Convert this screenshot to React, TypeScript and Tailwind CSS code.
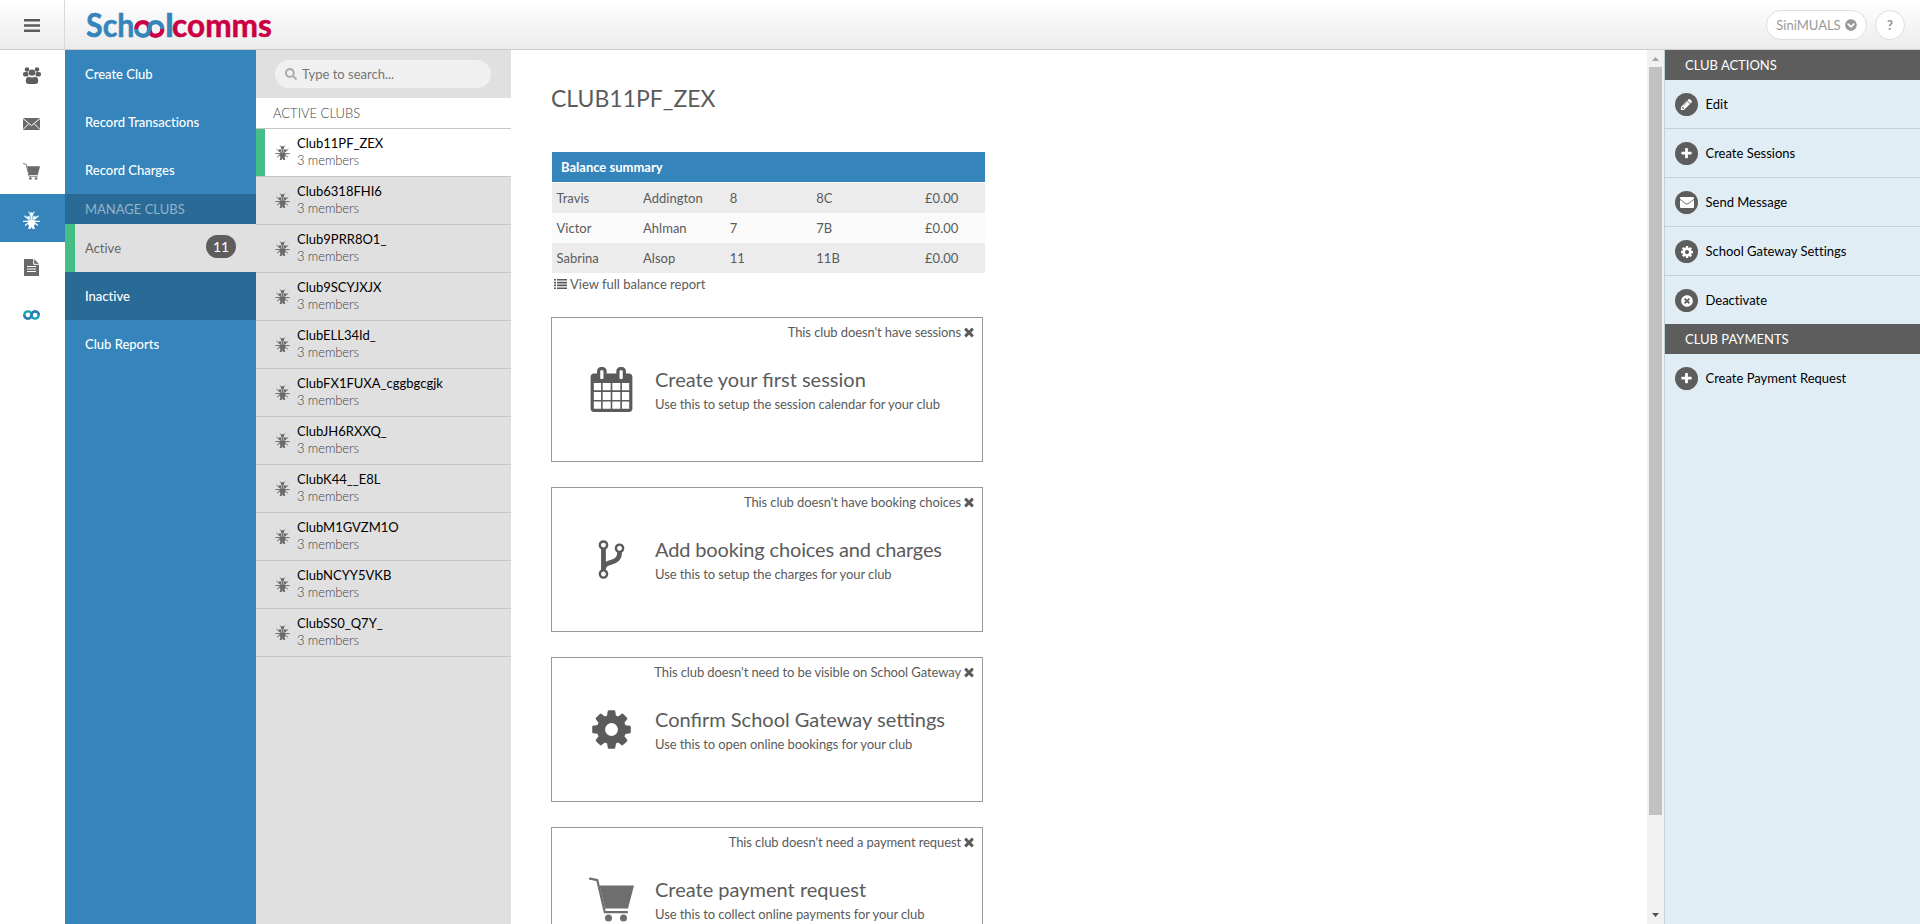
import React from "react";
import { FaChevronCircleDown, FaSearch, FaTimesCircle } from "react-icons/fa";

type IconProps = { className?: string };

const paths = {
  times:
    "M1490 1322q0 40-28 68l-136 136q-28 28-68 28t-68-28l-294-294-294 294q-28 28-68 28t-68-28l-136-136q-28-28-28-68t28-68l294-294-294-294q-28-28-28-68t28-68l136-136q28-28 68-28t68 28l294 294 294-294q28-28 68-28t68 28l136 136q28 28 28 68t-28 68l-294 294 294 294q28 28 28 68z",
  cog: "M1152 896q0-106-75-181t-181-75-181 75-75 181 75 181 181 75 181-75 75-181zm512-109v222q0 12-8 23t-20 13l-185 28q-19 54-39 91 35 50 107 138 10 12 10 25t-9 23q-27 37-99 108t-94 71q-12 0-26-9l-138-108q-44 23-91 38-16 136-29 186-7 28-36 28h-222q-14 0-24.5-8.5t-11.500-21.500l-28-184q-49-16-90-37l-141 107q-10 9-25 9-14 0-25-11-126-114-165-168-7-10-7-23 0-12 8-23 15-21 51-66.500t54-70.500q-27-50-41-99l-183-27q-13-2-21-12.500t-8-23.500v-222q0-12 8-23t19-13l186-28q14-46 39-92-40-57-107-138-10-12-10-24 0-10 9-23 26-36 98.500-107.500t94.500-71.500q13 0 26 10l138 107q44-23 91-38 16-136 29-186 7-28 36-28h222q14 0 24.500 8.500t11.500 21.500l28 184q49 16 90 37l142-107q9-9 24-9 13 0 25 10 129 119 165 170 7 8 7 22 0 12-8 23-15 21-51 66.500t-54 70.500q26 50 41 98l183 28q13 2 21 12.500t8 23.500z",
  calendar:
    "M192 1664h288v-288h-288v288zm352 0h320v-288h-320v288zm-352-352h288v-320h-288v320zm352 0h320v-320h-320v320zm-352-384h288v-288h-288v288zm736 736h320v-288h-320v288zm-384-736h320v-288h-320v288zm768 736h288v-288h-288v288zm-384-352h320v-320h-320v320zm-352-864v-288q0-13-9.500-22.500t-22.500-9.500h-64q-13 0-22.500 9.500t-9.500 22.500v288q0 13 9.500 22.500t22.500 9.500h64q13 0 22.500-9.500t9.500-22.500zm736 864h288v-320h-288v320zm-384-384h320v-288h-320v288zm384 0h288v-288h-288v288zm32-480v-288q0-13-9.500-22.500t-22.500-9.500h-64q-13 0-22.500 9.500t-9.500 22.500v288q0 13 9.500 22.500t22.500 9.500h64q13 0 22.500-9.500t9.500-22.500zm384-64v1280q0 52-38 90t-90 38h-1408q-52 0-90-38t-38-90v-1280q0-52 38-90t90-38h128v-96q0-66 47-113t113-47h64q66 0 113 47t47 113v96h384v-96q0-66 47-113t113-47h64q66 0 113 47t47 113v96h128q52 0 90 38t38 90z",
  fork: "M672 1472q0-40-28-68t-68-28-68 28-28 68 28 68 68 28 68-28 28-68zm0-1152q0-40-28-68t-68-28-68 28-28 68 28 68 68 28 68-28 28-68zm640 128q0-40-28-68t-68-28-68 28-28 68 28 68 68 28 68-28 28-68zm96 0q0 52-26 96.500t-70 69.500q-2 287-226 414-67 38-203 81-128 40-169.500 71t-41.500 100v26q44 25 70 69.500t26 96.500q0 80-56 136t-136 56-136-56-56-136q0-52 26-96.500t70-69.500v-820q-44-25-70-69.500t-26-96.500q0-80 56-136t136-56 136 56 56 136q0 52-26 96.500t-70 69.500v497q54-26 154-57 55-17 87.500-29.500t70.500-31 59-39.500 40.500-51 28-69.500 8.500-91.500q-44-25-70-69.500t-26-96.500q0-80 56-136t136-56 136 56 56 136z",
  plus: "M1600 736v192q0 40-28 68t-68 28h-416v416q0 40-28 68t-68 28h-192q-40 0-68-28t-28-68v-416h-416q-40 0-68-28t-28-68v-192q0-40 28-68t68-28h416v-416q0-40 28-68t68-28h192q40 0 68 28t28 68v416h416q40 0 68 28t28 68z",
  pencil:
    "M491 1536l91-91-235-235-91 91v107h128v128h107zm523-928q0-22-22-22-10 0-17 7l-542 542q-7 7-7 17 0 22 22 22 10 0 17-7l542-542q7-7 7-17zm-54-192l416 416-832 832h-416v-416zm683 96q0 53-37 90l-166 166-416-416 166-165q36-38 90-38 53 0 91 38l235 234q37 39 37 91z",
};

function Glyph({ name, className }: { name: keyof typeof paths; className?: string }) {
  return (
    <svg viewBox="0 0 1792 1792" className={className} fill="currentColor">
      <path d={paths[name]} />
    </svg>
  );
}

function Bug({ className }: IconProps) {
  return (
    <svg viewBox="0 0 17 18" className={className} fill="currentColor">
      <circle cx="8.5" cy="3.2" r="1.9" />
      <path d="M5.200 .8 8.500 3.200 11.800 .8" fill="none" stroke="currentColor" strokeWidth="1" />
      <circle cx="5.500" cy="6.800" r="1.700" />
      <circle cx="11.500" cy="6.800" r="1.700" />
      <path d="M7.500 5h2v3.500h-2z" />
      <path
        d="M1.500 4.800 5.500 8.300M15.500 4.800l-4 3.500M0 10.300h17M2 14.600l4-3M15 14.600l-4-3"
        fill="none"
        stroke="currentColor"
        strokeWidth="1.200"
      />
      <path d="M5.500 8.600h6l.8 4.400-1.300 1.500.8 3.500H9.600l-1.100-2-1.100 2H5.200l.8-3.500L4.700 13z" />
    </svg>
  );
}

function Cart({ className }: IconProps) {
  return (
    <svg viewBox="0 0 45 45" className={className} fill="currentColor">
      <path d="M1 1.700 8.300 3.200 15.800 35.200H38" fill="none" stroke="currentColor" strokeWidth="2.200" strokeLinecap="round" strokeLinejoin="round" />
      <path d="M10.500 8.500H45L39 31.500H16z" />
      <circle cx="19.500" cy="41" r="3.500" />
      <circle cx="34.500" cy="41" r="3.500" />
    </svg>
  );
}

function People({ className }: IconProps) {
  return (
    <svg viewBox="0 0 18 17" className={className} fill="currentColor">
      <circle cx="4" cy="2.500" r="2.300" />
      <circle cx="14" cy="2.500" r="2.300" />
      <rect x="0" y="5" width="5.600" height="4.600" rx="2" />
      <rect x="12.400" y="5" width="5.600" height="4.600" rx="2" />
      <circle cx="9" cy="5.600" r="3.200" />
      <path d="M5.500 9.700Q9 11.300 12.500 9.700 15.200 10 15.200 14q0 3-3 3H5.800q-3 0-3-3 0-4 2.700-4.300z" />
    </svg>
  );
}

function Mail({ className }: IconProps) {
  return (
    <svg viewBox="0 0 17 12" className={className}>
      <rect width="17" height="12" fill="currentColor" />
      <path d="M0 .5 8.500 7.600 17 .5M0 11.500l5.800-5.800M17 11.500l-5.800-5.800" fill="none" stroke="#fff" strokeWidth="1" />
    </svg>
  );
}

function Page({ className }: IconProps) {
  return (
    <svg viewBox="0 0 15 17" className={className}>
      <path d="M0 0h10l5 5v12H0z" fill="currentColor" />
      <path d="M9.700 0v5.300H15M3 7.500h9M3 10h9M3 12.500h9" fill="none" stroke="#fff" strokeWidth="1" />
    </svg>
  );
}

function Rings({ className }: IconProps) {
  return (
    <svg viewBox="0 0 17 10" className={className} fill="none" strokeWidth="2.400">
      <circle cx="4.900" cy="5" r="3.600" stroke="#12a5b8" />
      <circle cx="12.100" cy="5" r="3.600" stroke="#12a5b8" />
      <path d="M1.300 5a3.600 3.600 0 0 0 6.500 2.100L9.300 2.800A3.600 3.600 0 0 1 15.700 5" stroke="#3178b4" />
    </svg>
  );
}

function Envelope({ className }: IconProps) {
  return (
    <svg viewBox="0 0 14 11" className={className}>
      <rect width="14" height="11" rx="1" fill="currentColor" />
      <path d="M0 2.300Q5.800 7 7 7T14 2.300" fill="none" stroke="#5d5d5d" strokeWidth=".9" />
    </svg>
  );
}

function ListIcon({ className }: IconProps) {
  return (
    <svg viewBox="0 0 13 10" className={className} fill="currentColor">
      <path d="M0 0h2v1.600H0zM3 0h10v1.600H3zM0 2.800h2v1.600H0zM3 2.800h10v1.600H3zM0 5.600h2v1.600H0zM3 5.600h10v1.600H3zM0 8.400h2V10H0zM3 8.400h10V10H3z" />
    </svg>
  );
}

function Logo() {
  return (
    <svg width="194" height="48" viewBox="0 -4 194 48" className="font-['Lato',sans-serif] text-[32.5px] font-bold">
      <g strokeWidth=".5">
        <text x="0" y="31.800" textLength="48.500" lengthAdjust="spacingAndGlyphs" fill="#3585bc" stroke="#3585bc">Sch</text>
        <text x="79" y="31.800" textLength="9" lengthAdjust="spacingAndGlyphs" fill="#3585bc" stroke="#3585bc">l</text>
        <text x="86" y="31.800" textLength="100" lengthAdjust="spacingAndGlyphs" fill="#cb0044" stroke="#cb0044">comms</text>
      </g>
      <g fill="none" strokeWidth="4.200">
        <path d="M50.300 23.900a6.800 6.800 0 0 1 11.800-4.600L64.500 28.500a6.800 6.800 0 0 0 11.800-4.600" stroke="#cb0044" />
        <path d="M50.300 23.900a6.800 6.800 0 0 0 11.800 4.600L64.500 19.300a6.800 6.800 0 0 1 11.800 4.600" stroke="#3585bc" />
      </g>
    </svg>
  );
}

const clubs = [
  "Club11PF_ZEX", "Club6318FHI6", "Club9PRR8O1_", "Club9SCYJXJX", "ClubELL34Id_", "ClubFX1FUXA_cggbgcgjk",
  "ClubJH6RXXQ_", "ClubK44__E8L", "ClubM1GVZM1O", "ClubNCYY5VKB", "ClubSS0_Q7Y_",
];

const balances = [
  ["Travis", "Addington", "8", "8C", "£0.00"],
  ["Victor", "Ahlman", "7", "7B", "£0.00"],
  ["Sabrina", "Alsop", "11", "11B", "£0.00"],
];

const cards = [
  { note: "This club doesn't have sessions", title: "Create your first session", text: "Use this to setup the session calendar for your club", icon: <Glyph name="calendar" className="size-[45px]" /> },
  { note: "This club doesn't have booking choices", title: "Add booking choices and charges", tight: true, text: "Use this to setup the charges for your club", icon: <Glyph name="fork" className="size-[45px]" /> },
  { note: "This club doesn't need to be visible on School Gateway", title: "Confirm School Gateway settings", text: "Use this to open online bookings for your club", icon: <Glyph name="cog" className="size-[45px]" /> },
  { note: "This club doesn't need a payment request", title: "Create payment request", text: "Use this to collect online payments for your club", icon: <Cart className="size-[45px] text-[#6e6e6e]" /> },
];

const actions = [
  { label: "Edit", icon: <Glyph name="pencil" className="size-[13px]" /> },
  { label: "Create Sessions", icon: <Glyph name="plus" className="size-[13px]" /> },
  { label: "Send Message", icon: <Envelope className="h-[11px] w-[14px]" /> },
  { label: "School Gateway Settings", icon: <Glyph name="cog" className="size-[14px]" /> },
  { label: "Deactivate", icon: <FaTimesCircle className="size-[12px]" /> },
];

function NavItem({ label, dark }: { label: string; dark?: boolean }) {
  return (
    <div className={`flex h-12 items-center pt-0.5 pl-5 font-medium text-white ${dark ? "bg-[#2a6a96]" : ""}`}>{label}</div>
  );
}

function PanelHeading({ children }: { children: string }) {
  return <h2 className="flex h-[30px] items-center bg-[#5d5d5d] pt-0.5 pl-5 text-white">{children}</h2>;
}

function Action({ label, icon, last }: { label: string; icon: React.ReactNode; last?: boolean }) {
  return (
    <div className={`flex items-center gap-[7.5px] pl-2.5 text-black ${last ? "h-12" : "h-[49px] border-b border-[#c1d1da]"}`}>
      <span className="mt-px flex size-[23px] items-center justify-center rounded-full bg-[#5d5d5d] text-white">{icon}</span>
      <span className="pt-0.5">{label}</span>
    </div>
  );
}

export default function App() {
  return (
    <div className="flex h-[924px] w-[1920px] flex-col overflow-hidden bg-white font-['Lato',sans-serif] text-[13px] text-[#5b5b5b] [font-variant-ligatures:none]">
      <header className="flex h-[50px] shrink-0 items-center border-b border-[#ccc] bg-linear-to-b from-white to-[#ececec]">
        <div className="flex h-full w-[65px] items-center justify-center border-r border-[#d9d9d9]">
          <svg viewBox="0 0 16 13" className="mt-0.5 h-[13px] w-4" fill="#5b5b5b">
            <path d="M0 0h16v2.600H0zM0 5.200h16v2.600H0zM0 10.400h16V13H0z" />
          </svg>
        </div>
        <div className="h-12 pl-[21px]"><Logo /></div>
        <div className="mr-[15px] ml-auto flex items-center gap-2 text-[#999]">
          <div className="flex h-[30px] w-[101px] items-center justify-center gap-1 rounded-full border border-[#ddd] bg-white">
            <span className="pt-0.5">SiniMUALS</span>
            <FaChevronCircleDown className="mt-px size-3" />
          </div>
          <div className="flex size-[30px] items-center justify-center rounded-full border border-[#ddd] bg-white pt-0.5 text-[13px] font-black">?</div>
        </div>
      </header>

      <div className="flex min-h-0 flex-1">
        <nav className="flex w-[65px] shrink-0 flex-col text-[#6a6a6a] *:flex *:h-12 *:items-center *:justify-center *:pr-[2px]">
          <div><People className="mt-[3px] h-[17px] w-[18px] text-[#5d5d5d]" /></div>
          <div><Mail className="mt-[3px] h-3 w-[17px]" /></div>
          <div><Cart className="mt-[3px] size-[17px]" /></div>
          <div className="bg-[#3585bc] text-white"><Bug className="mt-[3px] h-[18px] w-[17px]" /></div>
          <div><Page className="mt-[3px] h-[17px] w-[15px]" /></div>
          <div><Rings className="mt-0.5 h-2.5 w-[17px]" /></div>
        </nav>

        <aside className="w-[191px] shrink-0 bg-[#3585bc]">
          <NavItem label="Create Club" />
          <NavItem label="Record Transactions" />
          <NavItem label="Record Charges" />
          <div className="flex h-[30px] items-center bg-[#2a6a96] pt-0.5 pl-5 text-[#94b4ca]">MANAGE CLUBS</div>
          <div className="flex h-12 items-center border-l-[10px] border-[#45bd87] bg-[#e0e0e0] pr-5 pl-2.5">
            <span className="pt-0.5 text-[#666]">Active</span>
            <span className="mb-[3px] ml-auto flex h-[23px] w-[30px] items-center justify-center rounded-full bg-[#5d5d5d] text-sm text-white">11</span>
          </div>
          <NavItem label="Inactive" dark />
          <NavItem label="Club Reports" />
        </aside>

        <section className="w-[255px] shrink-0 bg-[#e0e0e0]">
          <div className="flex h-12 items-center pl-[19px]">
            <div className="flex h-7 w-[216px] items-center gap-[5px] rounded-full bg-[#f0f0f0] pl-2.5 text-[#757575]">
              <FaSearch className="size-3 text-[#aaa]" />
              <span className="pt-px">Type to search...</span>
            </div>
          </div>
          <h2 className="flex h-[31px] items-center border-b border-[#c6c6c6] bg-white pt-0.5 pl-[17px] font-light text-[#444]">ACTIVE CLUBS</h2>
          {clubs.map((club, i) => (
            <div
              key={club}
              className={`flex h-12 items-center border-b border-[#c6c6c6] ${i === 0 ? "bg-white" : ""}`}
            >
              <span className={`w-[9px] self-stretch ${i === 0 ? "bg-[#45bd87]" : ""}`} />
              <Bug className="ml-2.5 h-[15px] w-[15px] text-[#6c6c6c]" />
              <div className="pb-0.5 pl-[7px] leading-[17px]">
                <p className="text-black">{club}</p>
                <p className="font-light tracking-[-0.1px] text-[#444]">3 members</p>
              </div>
            </div>
          ))}
        </section>

        <main className="min-w-0 flex-1 overflow-hidden pl-10">
          <h1 className="pt-8 text-[23px] leading-8">CLUB11PF_ZEX</h1>
          <div className="mt-[38px] ml-px w-[433px]">
            <div className="mb-px flex h-[30px] items-center bg-[#3585bc] pt-0.5 pl-[9px] font-bold text-white">Balance summary</div>
            {balances.map((row) => (
              <div key={row[0]} className="grid h-[30px] grid-cols-5 items-center pt-0.5 odd:bg-[#fafafa] even:bg-[#ececec]">
                {row.map((cell, i) => (
                  <span key={i} className="px-[4.5px] text-left last:text-center">{cell}</span>
                ))}
              </div>
            ))}
          </div>
          <div className="flex h-[22px] items-center gap-[3px] pl-[3px]">
            <ListIcon className="h-2.5 w-[13px]" />
            <span className="pt-0.5">View full balance report</span>
          </div>
          <div className="mt-[22px] flex flex-col gap-[25px]">
            {cards.map((card) => (
              <div key={card.title} className="h-[145px] w-[432px] border border-[#999]">
                <div className="mt-[5px] flex items-center justify-end gap-px pr-[6px] leading-[18px] tracking-[-0.1px]">
                  {card.note}
                  <Glyph name="times" className="size-[14px]" />
                </div>
                <div className="mt-[26px] flex items-start">
                  <div className="ml-[37px] w-[66px]">{card.icon}</div>
                  <div>
                    <p className={`text-xl leading-6 [font-variant-ligatures:normal] ${card.tight ? "tracking-[-0.15px]" : ""}`}>{card.title}</p>
                    <p className="pt-px leading-6 tracking-[-0.09px]">{card.text}</p>
                  </div>
                </div>
              </div>
            ))}
          </div>
        </main>

        <div className="flex w-[17px] shrink-0 flex-col items-center bg-[#f1f1f1]">
          <svg viewBox="0 0 7 4" className="mt-[7px] h-1 w-[7px]" fill="#a3a3a3"><path d="M3.500 0 7 4H0z" /></svg>
          <div className="mt-1.5 h-[748px] w-[13px] bg-[#c1c1c1]" />
          <svg viewBox="0 0 7 4" className="mt-auto mb-[7px] h-1 w-[7px]" fill="#505050"><path d="M0 0h7L3.500 4z" /></svg>
        </div>

        <aside className="w-[256px] shrink-0 border-l border-[#c1d1da] bg-[#e0edf5]">
          <PanelHeading>CLUB ACTIONS</PanelHeading>
          {actions.map((a, i) => (
            <Action key={a.label} label={a.label} icon={a.icon} last={i === actions.length - 1} />
          ))}
          <PanelHeading>CLUB PAYMENTS</PanelHeading>
          <Action label="Create Payment Request" icon={<Glyph name="plus" className="size-[13px]" />} last />
        </aside>
      </div>
    </div>
  );
}
